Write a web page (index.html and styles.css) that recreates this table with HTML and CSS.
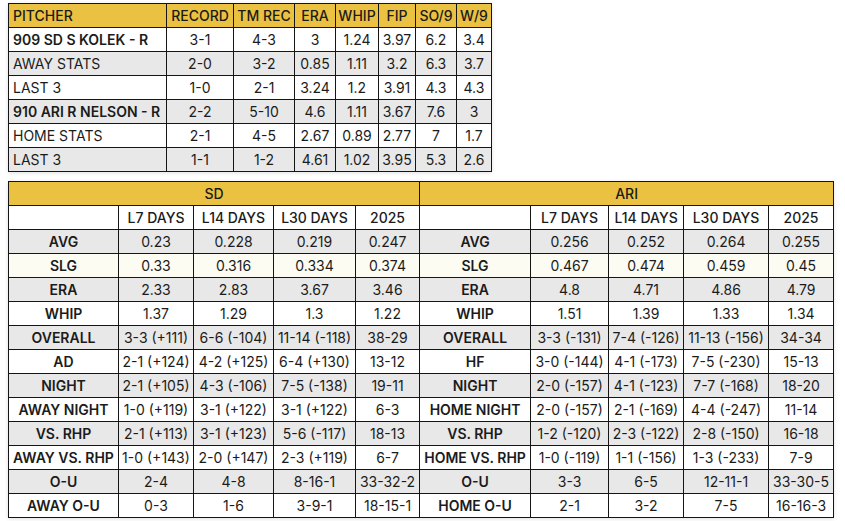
FILE: index.html
```html
<!DOCTYPE html>
<html>
<head>
<meta charset="utf-8">
<link rel="stylesheet" href="styles.css">
</head>
<body>
<div class="page">
<table class="tbl pitchers">
  <colgroup>
    <col style="width:158px"><col style="width:67px"><col style="width:61px"><col style="width:41px"><col style="width:43px"><col style="width:37px"><col style="width:41px"><col style="width:35px">
  </colgroup>
  <thead>
    <tr class="head"><th class="left">PITCHER</th><th>RECORD</th><th>TM REC</th><th>ERA</th><th>WHIP</th><th>FIP</th><th>SO/9</th><th>W/9</th></tr>
  </thead>
  <tbody>
    <tr><td class="left strong">909 SD S KOLEK - R</td><td>3-1</td><td>4-3</td><td>3</td><td>1.24</td><td>3.97</td><td>6.2</td><td>3.4</td></tr>
    <tr class="grey"><td class="left">AWAY STATS</td><td>2-0</td><td>3-2</td><td>0.85</td><td>1.11</td><td>3.2</td><td>6.3</td><td>3.7</td></tr>
    <tr><td class="left">LAST 3</td><td>1-0</td><td>2-1</td><td>3.24</td><td>1.2</td><td>3.91</td><td>4.3</td><td>4.3</td></tr>
    <tr class="grey"><td class="left strong">910 ARI R NELSON - R</td><td>2-2</td><td>5-10</td><td>4.6</td><td>1.11</td><td>3.67</td><td>7.6</td><td>3</td></tr>
    <tr><td class="left">HOME STATS</td><td>2-1</td><td>4-5</td><td>2.67</td><td>0.89</td><td>2.77</td><td>7</td><td>1.7</td></tr>
    <tr class="grey"><td class="left">LAST 3</td><td>1-1</td><td>1-2</td><td>4.61</td><td>1.02</td><td>3.95</td><td>5.3</td><td>2.6</td></tr>
  </tbody>
</table>

<table class="tbl teams">
  <colgroup>
    <col style="width:110px"><col style="width:75px"><col style="width:80px"><col style="width:82px"><col style="width:64px">
    <col style="width:111px"><col style="width:78px"><col style="width:75px"><col style="width:85px"><col style="width:65px">
  </colgroup>
  <thead>
    <tr class="head"><th colspan="5">SD</th><th colspan="5">ARI</th></tr>
  </thead>
  <tbody>
    <tr class="sub"><td></td><td>L7 DAYS</td><td>L14 DAYS</td><td>L30 DAYS</td><td>2025</td><td></td><td>L7 DAYS</td><td>L14 DAYS</td><td>L30 DAYS</td><td>2025</td></tr>
    <tr class="grey"><td class="lbl">AVG</td><td>0.23</td><td>0.228</td><td>0.219</td><td>0.247</td><td class="lbl">AVG</td><td>0.256</td><td>0.252</td><td>0.264</td><td>0.255</td></tr>
    <tr class="cream"><td class="lbl">SLG</td><td>0.33</td><td>0.316</td><td>0.334</td><td>0.374</td><td class="lbl">SLG</td><td>0.467</td><td>0.474</td><td>0.459</td><td>0.45</td></tr>
    <tr class="grey"><td class="lbl">ERA</td><td>2.33</td><td>2.83</td><td>3.67</td><td>3.46</td><td class="lbl">ERA</td><td>4.8</td><td>4.71</td><td>4.86</td><td>4.79</td></tr>
    <tr><td class="lbl">WHIP</td><td>1.37</td><td>1.29</td><td>1.3</td><td>1.22</td><td class="lbl">WHIP</td><td>1.51</td><td>1.39</td><td>1.33</td><td>1.34</td></tr>
    <tr class="grey"><td class="lbl">OVERALL</td><td>3-3 (+111)</td><td>6-6 (-104)</td><td>11-14 (-118)</td><td>38-29</td><td class="lbl">OVERALL</td><td>3-3 (-131)</td><td>7-4 (-126)</td><td>11-13 (-156)</td><td>34-34</td></tr>
    <tr><td class="lbl">AD</td><td>2-1 (+124)</td><td>4-2 (+125)</td><td>6-4 (+130)</td><td>13-12</td><td class="lbl">HF</td><td>3-0 (-144)</td><td>4-1 (-173)</td><td>7-5 (-230)</td><td>15-13</td></tr>
    <tr class="grey"><td class="lbl">NIGHT</td><td>2-1 (+105)</td><td>4-3 (-106)</td><td>7-5 (-138)</td><td>19-11</td><td class="lbl">NIGHT</td><td>2-0 (-157)</td><td>4-1 (-123)</td><td>7-7 (-168)</td><td>18-20</td></tr>
    <tr><td class="lbl">AWAY NIGHT</td><td>1-0 (+119)</td><td>3-1 (+122)</td><td>3-1 (+122)</td><td>6-3</td><td class="lbl">HOME NIGHT</td><td>2-0 (-157)</td><td>2-1 (-169)</td><td>4-4 (-247)</td><td>11-14</td></tr>
    <tr class="grey"><td class="lbl">VS. RHP</td><td>2-1 (+113)</td><td>3-1 (+123)</td><td>5-6 (-117)</td><td>18-13</td><td class="lbl">VS. RHP</td><td>1-2 (-120)</td><td>2-3 (-122)</td><td>2-8 (-150)</td><td>16-18</td></tr>
    <tr><td class="lbl">AWAY VS. RHP</td><td>1-0 (+143)</td><td>2-0 (+147)</td><td>2-3 (+119)</td><td>6-7</td><td class="lbl">HOME VS. RHP</td><td>1-0 (-119)</td><td>1-1 (-156)</td><td>1-3 (-233)</td><td>7-9</td></tr>
    <tr class="grey"><td class="lbl">O-U</td><td>2-4</td><td>4-8</td><td>8-16-1</td><td>33-32-2</td><td class="lbl">O-U</td><td>3-3</td><td>6-5</td><td>12-11-1</td><td>33-30-5</td></tr>
    <tr><td class="lbl">AWAY O-U</td><td>0-3</td><td>1-6</td><td>3-9-1</td><td>18-15-1</td><td class="lbl">HOME O-U</td><td>2-1</td><td>3-2</td><td>7-5</td><td>16-16-3</td></tr>
  </tbody>
</table>
</div>
</body>
</html>
```

FILE: styles.css
```css
html, body {
  margin: 0;
  padding: 0;
  background: #ffffff;
}

.page {
  display: flex;
  flex-direction: column;
  align-items: flex-start;
  gap: 9px;
  padding: 3px 8px;
  font-family: Inter, "Noto Sans", sans-serif;
  font-size: 14px;
  color: #1b1b1b;
}

.tbl {
  border-collapse: collapse;
  table-layout: fixed;
  box-shadow: 0 1px 4px rgba(0, 0, 0, 0.12);
}

.pitchers { width: 483px; }
.teams { width: 825px; }

.tbl th,
.tbl td {
  border: 1px solid #151515;
  height: 23px;
  padding: 0 1px;
  text-align: center;
  white-space: nowrap;
  overflow: hidden;
  font-weight: 400;
  line-height: 22px;
}

.tbl .head th {
  background: #ebc142;
  font-weight: 500;
}

.tbl .left {
  text-align: left;
  padding-left: 4px;
}

.tbl .strong { font-weight: 600; }

.tbl .sub td { font-weight: 500; }

.tbl .lbl { font-weight: 600; }

.tbl .grey td { background: #e8e8e8; }
.tbl .cream td { background: #fdfcf3; }
```
